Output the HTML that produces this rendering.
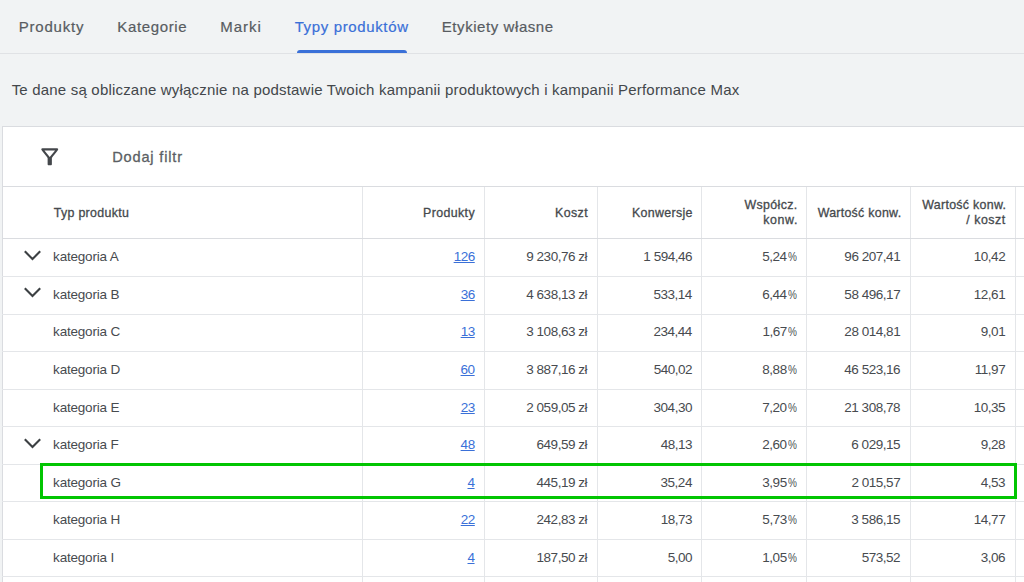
<!DOCTYPE html>
<html><head><meta charset="utf-8"><style>
html,body{margin:0;padding:0;}
body{width:1024px;height:582px;overflow:hidden;position:relative;background:#f1f3f4;font-family:"Liberation Sans",sans-serif;}
.t{position:absolute;white-space:nowrap;}
.r{position:absolute;box-sizing:content-box;}
.lnk{text-decoration:underline;text-underline-offset:1px;text-decoration-thickness:1px;}
</style></head><body>
<div class="t" style="left:18.75px;top:19.30px;font-size:15px;line-height:15px;color:#585c61;letter-spacing:0.786px;-webkit-text-stroke:0.2px #585c61;">Produkty</div>
<div class="t" style="left:117.35px;top:19.30px;font-size:15px;line-height:15px;color:#585c61;letter-spacing:0.625px;-webkit-text-stroke:0.2px #585c61;">Kategorie</div>
<div class="t" style="left:220.25px;top:19.30px;font-size:15px;line-height:15px;color:#585c61;letter-spacing:0.963px;-webkit-text-stroke:0.2px #585c61;">Marki</div>
<div class="t" style="left:294.65px;top:19.30px;font-size:15px;line-height:15px;color:#3a70d8;letter-spacing:0.638px;-webkit-text-stroke:0.2px #3a70d8;">Typy produktów</div>
<div class="t" style="left:441.75px;top:19.30px;font-size:15px;line-height:15px;color:#585c61;letter-spacing:0.571px;-webkit-text-stroke:0.2px #585c61;">Etykiety własne</div>
<div class="r" style="left:0;top:53px;width:1024px;height:1px;background:#e0e2e5"></div>
<div class="r" style="left:296.5px;top:50px;width:110.5px;height:3px;background:#3a70d8;border-radius:3px 3px 0 0"></div>
<div class="t" style="left:11.65px;top:82.30px;font-size:15px;line-height:15px;color:#43474b;letter-spacing:0.195px;">Te dane są obliczane wyłącznie na podstawie Twoich kampanii produktowych i kampanii Performance Max</div>
<div class="r" style="left:2px;top:126px;width:1030px;height:460px;background:#fff;border-left:1px solid #dadce0;border-top:1px solid #dadce0"></div>
<svg class="r" style="left:36.7px;top:143.75px" width="25.5" height="25.5" viewBox="0 0 24 24"><path fill="#44474b" d="M7 6h10l-5.01 6.3L7 6zm-2.75-.39C6.27 8.2 10 13 10 13v6c0 .55.45 1 1 1h2c.55 0 1-.45 1-1v-6s3.72-4.8 5.74-7.39A.998.998 0 0 0 18.95 4H5.04c-.83 0-1.3.95-.79 1.61z"/></svg>
<div class="t" style="left:112.20px;top:149.64px;font-size:14.6px;line-height:14.6px;color:#5b5f64;letter-spacing:0.820px;-webkit-text-stroke:0.3px #5b5f64;">Dodaj filtr</div>
<div class="r" style="left:2px;top:186px;width:1030px;height:1px;background:#dadce0"></div>
<div class="r" style="left:362px;top:187px;width:1px;height:400px;background:#e4e6e9"></div>
<div class="r" style="left:484px;top:187px;width:1px;height:400px;background:#e4e6e9"></div>
<div class="r" style="left:597px;top:187px;width:1px;height:400px;background:#e4e6e9"></div>
<div class="r" style="left:701px;top:187px;width:1px;height:400px;background:#e4e6e9"></div>
<div class="r" style="left:806px;top:187px;width:1px;height:400px;background:#e4e6e9"></div>
<div class="r" style="left:910px;top:187px;width:1px;height:400px;background:#e4e6e9"></div>
<div class="r" style="left:1015px;top:187px;width:1px;height:400px;background:#e4e6e9"></div>
<div class="r" style="left:2px;top:238px;width:1030px;height:1px;background:#dadce0"></div>
<div class="t" style="left:53.75px;top:206.50px;font-size:12.4px;line-height:12.4px;color:#45494d;letter-spacing:0.309px;-webkit-text-stroke:0.3px #45494d;">Typ produktu</div>
<div class="t" style="left:423.00px;top:206.50px;font-size:12.4px;line-height:12.4px;color:#45494d;letter-spacing:0.386px;-webkit-text-stroke:0.3px #45494d;">Produkty</div>
<div class="t" style="left:555.00px;top:206.50px;font-size:12.4px;line-height:12.4px;color:#45494d;letter-spacing:0.400px;-webkit-text-stroke:0.3px #45494d;">Koszt</div>
<div class="t" style="left:632.00px;top:206.50px;font-size:12.4px;line-height:12.4px;color:#45494d;letter-spacing:0.331px;-webkit-text-stroke:0.3px #45494d;">Konwersje</div>
<div class="t" style="left:744.45px;top:198.80px;font-size:12.4px;line-height:12.4px;color:#45494d;letter-spacing:0.371px;-webkit-text-stroke:0.3px #45494d;">Współcz.</div>
<div class="t" style="left:763.15px;top:214.10px;font-size:12.4px;line-height:12.4px;color:#45494d;letter-spacing:0.625px;-webkit-text-stroke:0.3px #45494d;">konw.</div>
<div class="t" style="left:817.65px;top:206.50px;font-size:12.4px;line-height:12.4px;color:#45494d;letter-spacing:0.279px;-webkit-text-stroke:0.3px #45494d;">Wartość konw.</div>
<div class="t" style="left:922.35px;top:199.10px;font-size:12.4px;line-height:12.4px;color:#45494d;letter-spacing:0.287px;-webkit-text-stroke:0.3px #45494d;">Wartość konw.</div>
<div class="t" style="left:966.30px;top:214.40px;font-size:12.4px;line-height:12.4px;color:#45494d;letter-spacing:0.525px;-webkit-text-stroke:0.3px #45494d;">/ koszt</div>
<div class="r" style="left:2px;top:276px;width:1030px;height:1px;background:#e4e6e9"></div>
<div class="t" style="left:53.10px;top:250.27px;font-size:13.5px;line-height:13.5px;color:#474b4f;letter-spacing:-0.200px;">kategoria A</div>
<svg class="r" style="left:20px;top:246.90px" width="26" height="16" viewBox="0 0 26 16"><path fill="none" stroke="#3c4043" stroke-width="2.1" d="M4.8 4.3 L12.5 12 L20.2 4.3"/></svg>
<div class="t lnk" style="left:453.64px;top:250.27px;font-size:13.5px;line-height:13.5px;color:#3a70d8;letter-spacing:-0.470px;">126</div>
<div class="t" style="left:526.25px;top:250.27px;font-size:13.5px;line-height:13.5px;color:#474b4f;letter-spacing:-0.470px;">9 230,76 zł</div>
<div class="t" style="left:643.34px;top:250.27px;font-size:13.5px;line-height:13.5px;color:#474b4f;letter-spacing:-0.470px;">1 594,46</div>
<div class="t" style="left:762.16px;top:250.27px;font-size:13.5px;line-height:13.5px;color:#474b4f;letter-spacing:-0.470px;">5,24</div>
<div class="t" style="left:787.63px;top:250.27px;font-size:13.5px;line-height:13.5px;color:#474b4f;transform:scaleX(0.742);transform-origin:0 0">%</div>
<div class="t" style="left:844.36px;top:250.27px;font-size:13.5px;line-height:13.5px;color:#474b4f;letter-spacing:-0.470px;">96 207,41</div>
<div class="t" style="left:973.78px;top:250.27px;font-size:13.5px;line-height:13.5px;color:#474b4f;letter-spacing:-0.470px;">10,42</div>
<div class="r" style="left:2px;top:314px;width:1030px;height:1px;background:#e4e6e9"></div>
<div class="t" style="left:53.10px;top:287.84px;font-size:13.5px;line-height:13.5px;color:#474b4f;letter-spacing:-0.200px;">kategoria B</div>
<svg class="r" style="left:20px;top:284.47px" width="26" height="16" viewBox="0 0 26 16"><path fill="none" stroke="#3c4043" stroke-width="2.1" d="M4.8 4.3 L12.5 12 L20.2 4.3"/></svg>
<div class="t lnk" style="left:460.67px;top:287.84px;font-size:13.5px;line-height:13.5px;color:#3a70d8;letter-spacing:-0.470px;">36</div>
<div class="t" style="left:526.25px;top:287.84px;font-size:13.5px;line-height:13.5px;color:#474b4f;letter-spacing:-0.470px;">4 638,13 zł</div>
<div class="t" style="left:653.45px;top:287.84px;font-size:13.5px;line-height:13.5px;color:#474b4f;letter-spacing:-0.470px;">533,14</div>
<div class="t" style="left:762.16px;top:287.84px;font-size:13.5px;line-height:13.5px;color:#474b4f;letter-spacing:-0.470px;">6,44</div>
<div class="t" style="left:787.63px;top:287.84px;font-size:13.5px;line-height:13.5px;color:#474b4f;transform:scaleX(0.742);transform-origin:0 0">%</div>
<div class="t" style="left:844.36px;top:287.84px;font-size:13.5px;line-height:13.5px;color:#474b4f;letter-spacing:-0.470px;">58 496,17</div>
<div class="t" style="left:973.78px;top:287.84px;font-size:13.5px;line-height:13.5px;color:#474b4f;letter-spacing:-0.470px;">12,61</div>
<div class="r" style="left:2px;top:351px;width:1030px;height:1px;background:#e4e6e9"></div>
<div class="t" style="left:53.10px;top:325.41px;font-size:13.5px;line-height:13.5px;color:#474b4f;letter-spacing:-0.200px;">kategoria C</div>
<div class="t lnk" style="left:460.67px;top:325.41px;font-size:13.5px;line-height:13.5px;color:#3a70d8;letter-spacing:-0.470px;">13</div>
<div class="t" style="left:526.25px;top:325.41px;font-size:13.5px;line-height:13.5px;color:#474b4f;letter-spacing:-0.470px;">3 108,63 zł</div>
<div class="t" style="left:653.45px;top:325.41px;font-size:13.5px;line-height:13.5px;color:#474b4f;letter-spacing:-0.470px;">234,44</div>
<div class="t" style="left:762.41px;top:325.41px;font-size:13.5px;line-height:13.5px;color:#474b4f;letter-spacing:-0.470px;">1,67</div>
<div class="t" style="left:787.63px;top:325.41px;font-size:13.5px;line-height:13.5px;color:#474b4f;transform:scaleX(0.742);transform-origin:0 0">%</div>
<div class="t" style="left:844.36px;top:325.41px;font-size:13.5px;line-height:13.5px;color:#474b4f;letter-spacing:-0.470px;">28 014,81</div>
<div class="t" style="left:980.81px;top:325.41px;font-size:13.5px;line-height:13.5px;color:#474b4f;letter-spacing:-0.470px;">9,01</div>
<div class="r" style="left:2px;top:389px;width:1030px;height:1px;background:#e4e6e9"></div>
<div class="t" style="left:53.10px;top:362.98px;font-size:13.5px;line-height:13.5px;color:#474b4f;letter-spacing:-0.200px;">kategoria D</div>
<div class="t lnk" style="left:460.57px;top:362.98px;font-size:13.5px;line-height:13.5px;color:#3a70d8;letter-spacing:-0.470px;">60</div>
<div class="t" style="left:526.25px;top:362.98px;font-size:13.5px;line-height:13.5px;color:#474b4f;letter-spacing:-0.470px;">3 887,16 zł</div>
<div class="t" style="left:653.70px;top:362.98px;font-size:13.5px;line-height:13.5px;color:#474b4f;letter-spacing:-0.470px;">540,02</div>
<div class="t" style="left:762.31px;top:362.98px;font-size:13.5px;line-height:13.5px;color:#474b4f;letter-spacing:-0.470px;">8,88</div>
<div class="t" style="left:787.63px;top:362.98px;font-size:13.5px;line-height:13.5px;color:#474b4f;transform:scaleX(0.742);transform-origin:0 0">%</div>
<div class="t" style="left:844.31px;top:362.98px;font-size:13.5px;line-height:13.5px;color:#474b4f;letter-spacing:-0.470px;">46 523,16</div>
<div class="t" style="left:974.78px;top:362.98px;font-size:13.5px;line-height:13.5px;color:#474b4f;letter-spacing:-0.470px;">11,97</div>
<div class="r" style="left:2px;top:426px;width:1030px;height:1px;background:#e4e6e9"></div>
<div class="t" style="left:53.10px;top:400.55px;font-size:13.5px;line-height:13.5px;color:#474b4f;letter-spacing:-0.200px;">kategoria E</div>
<div class="t lnk" style="left:460.67px;top:400.55px;font-size:13.5px;line-height:13.5px;color:#3a70d8;letter-spacing:-0.470px;">23</div>
<div class="t" style="left:526.25px;top:400.55px;font-size:13.5px;line-height:13.5px;color:#474b4f;letter-spacing:-0.470px;">2 059,05 zł</div>
<div class="t" style="left:653.55px;top:400.55px;font-size:13.5px;line-height:13.5px;color:#474b4f;letter-spacing:-0.470px;">304,30</div>
<div class="t" style="left:762.26px;top:400.55px;font-size:13.5px;line-height:13.5px;color:#474b4f;letter-spacing:-0.470px;">7,20</div>
<div class="t" style="left:787.63px;top:400.55px;font-size:13.5px;line-height:13.5px;color:#474b4f;transform:scaleX(0.742);transform-origin:0 0">%</div>
<div class="t" style="left:844.26px;top:400.55px;font-size:13.5px;line-height:13.5px;color:#474b4f;letter-spacing:-0.470px;">21 308,78</div>
<div class="t" style="left:973.68px;top:400.55px;font-size:13.5px;line-height:13.5px;color:#474b4f;letter-spacing:-0.470px;">10,35</div>
<div class="r" style="left:2px;top:464px;width:1030px;height:1px;background:#e4e6e9"></div>
<div class="t" style="left:53.10px;top:438.12px;font-size:13.5px;line-height:13.5px;color:#474b4f;letter-spacing:-0.200px;">kategoria F</div>
<svg class="r" style="left:20px;top:434.75px" width="26" height="16" viewBox="0 0 26 16"><path fill="none" stroke="#3c4043" stroke-width="2.1" d="M4.8 4.3 L12.5 12 L20.2 4.3"/></svg>
<div class="t lnk" style="left:460.62px;top:438.12px;font-size:13.5px;line-height:13.5px;color:#3a70d8;letter-spacing:-0.470px;">48</div>
<div class="t" style="left:536.56px;top:438.12px;font-size:13.5px;line-height:13.5px;color:#474b4f;letter-spacing:-0.470px;">649,59 zł</div>
<div class="t" style="left:660.73px;top:438.12px;font-size:13.5px;line-height:13.5px;color:#474b4f;letter-spacing:-0.470px;">48,13</div>
<div class="t" style="left:762.26px;top:438.12px;font-size:13.5px;line-height:13.5px;color:#474b4f;letter-spacing:-0.470px;">2,60</div>
<div class="t" style="left:787.63px;top:438.12px;font-size:13.5px;line-height:13.5px;color:#474b4f;transform:scaleX(0.742);transform-origin:0 0">%</div>
<div class="t" style="left:851.29px;top:438.12px;font-size:13.5px;line-height:13.5px;color:#474b4f;letter-spacing:-0.470px;">6 029,15</div>
<div class="t" style="left:980.71px;top:438.12px;font-size:13.5px;line-height:13.5px;color:#474b4f;letter-spacing:-0.470px;">9,28</div>
<div class="r" style="left:2px;top:501px;width:1030px;height:1px;background:#e4e6e9"></div>
<div class="t" style="left:53.10px;top:475.69px;font-size:13.5px;line-height:13.5px;color:#474b4f;letter-spacing:-0.200px;">kategoria G</div>
<div class="t lnk" style="left:467.50px;top:475.69px;font-size:13.5px;line-height:13.5px;color:#3a70d8;letter-spacing:-0.470px;">4</div>
<div class="t" style="left:536.56px;top:475.69px;font-size:13.5px;line-height:13.5px;color:#474b4f;letter-spacing:-0.470px;">445,19 zł</div>
<div class="t" style="left:660.53px;top:475.69px;font-size:13.5px;line-height:13.5px;color:#474b4f;letter-spacing:-0.470px;">35,24</div>
<div class="t" style="left:762.31px;top:475.69px;font-size:13.5px;line-height:13.5px;color:#474b4f;letter-spacing:-0.470px;">3,95</div>
<div class="t" style="left:787.63px;top:475.69px;font-size:13.5px;line-height:13.5px;color:#474b4f;transform:scaleX(0.742);transform-origin:0 0">%</div>
<div class="t" style="left:851.39px;top:475.69px;font-size:13.5px;line-height:13.5px;color:#474b4f;letter-spacing:-0.470px;">2 015,57</div>
<div class="t" style="left:980.76px;top:475.69px;font-size:13.5px;line-height:13.5px;color:#474b4f;letter-spacing:-0.470px;">4,53</div>
<div class="r" style="left:2px;top:539px;width:1030px;height:1px;background:#e4e6e9"></div>
<div class="t" style="left:53.10px;top:513.26px;font-size:13.5px;line-height:13.5px;color:#474b4f;letter-spacing:-0.200px;">kategoria H</div>
<div class="t lnk" style="left:460.72px;top:513.26px;font-size:13.5px;line-height:13.5px;color:#3a70d8;letter-spacing:-0.470px;">22</div>
<div class="t" style="left:536.56px;top:513.26px;font-size:13.5px;line-height:13.5px;color:#474b4f;letter-spacing:-0.470px;">242,83 zł</div>
<div class="t" style="left:660.73px;top:513.26px;font-size:13.5px;line-height:13.5px;color:#474b4f;letter-spacing:-0.470px;">18,73</div>
<div class="t" style="left:762.36px;top:513.26px;font-size:13.5px;line-height:13.5px;color:#474b4f;letter-spacing:-0.470px;">5,73</div>
<div class="t" style="left:787.63px;top:513.26px;font-size:13.5px;line-height:13.5px;color:#474b4f;transform:scaleX(0.742);transform-origin:0 0">%</div>
<div class="t" style="left:851.29px;top:513.26px;font-size:13.5px;line-height:13.5px;color:#474b4f;letter-spacing:-0.470px;">3 586,15</div>
<div class="t" style="left:973.78px;top:513.26px;font-size:13.5px;line-height:13.5px;color:#474b4f;letter-spacing:-0.470px;">14,77</div>
<div class="r" style="left:2px;top:576px;width:1030px;height:1px;background:#e4e6e9"></div>
<div class="t" style="left:53.10px;top:550.83px;font-size:13.5px;line-height:13.5px;color:#474b4f;letter-spacing:-0.200px;">kategoria I</div>
<div class="t lnk" style="left:467.50px;top:550.83px;font-size:13.5px;line-height:13.5px;color:#3a70d8;letter-spacing:-0.470px;">4</div>
<div class="t" style="left:536.56px;top:550.83px;font-size:13.5px;line-height:13.5px;color:#474b4f;letter-spacing:-0.470px;">187,50 zł</div>
<div class="t" style="left:667.66px;top:550.83px;font-size:13.5px;line-height:13.5px;color:#474b4f;letter-spacing:-0.470px;">5,00</div>
<div class="t" style="left:762.31px;top:550.83px;font-size:13.5px;line-height:13.5px;color:#474b4f;letter-spacing:-0.470px;">1,05</div>
<div class="t" style="left:787.63px;top:550.83px;font-size:13.5px;line-height:13.5px;color:#474b4f;transform:scaleX(0.742);transform-origin:0 0">%</div>
<div class="t" style="left:861.70px;top:550.83px;font-size:13.5px;line-height:13.5px;color:#474b4f;letter-spacing:-0.470px;">573,52</div>
<div class="t" style="left:980.76px;top:550.83px;font-size:13.5px;line-height:13.5px;color:#474b4f;letter-spacing:-0.470px;">3,06</div>
<div class="r" style="left:40px;top:463px;width:971px;height:30px;border:3px solid #02c502"></div>
</body></html>
